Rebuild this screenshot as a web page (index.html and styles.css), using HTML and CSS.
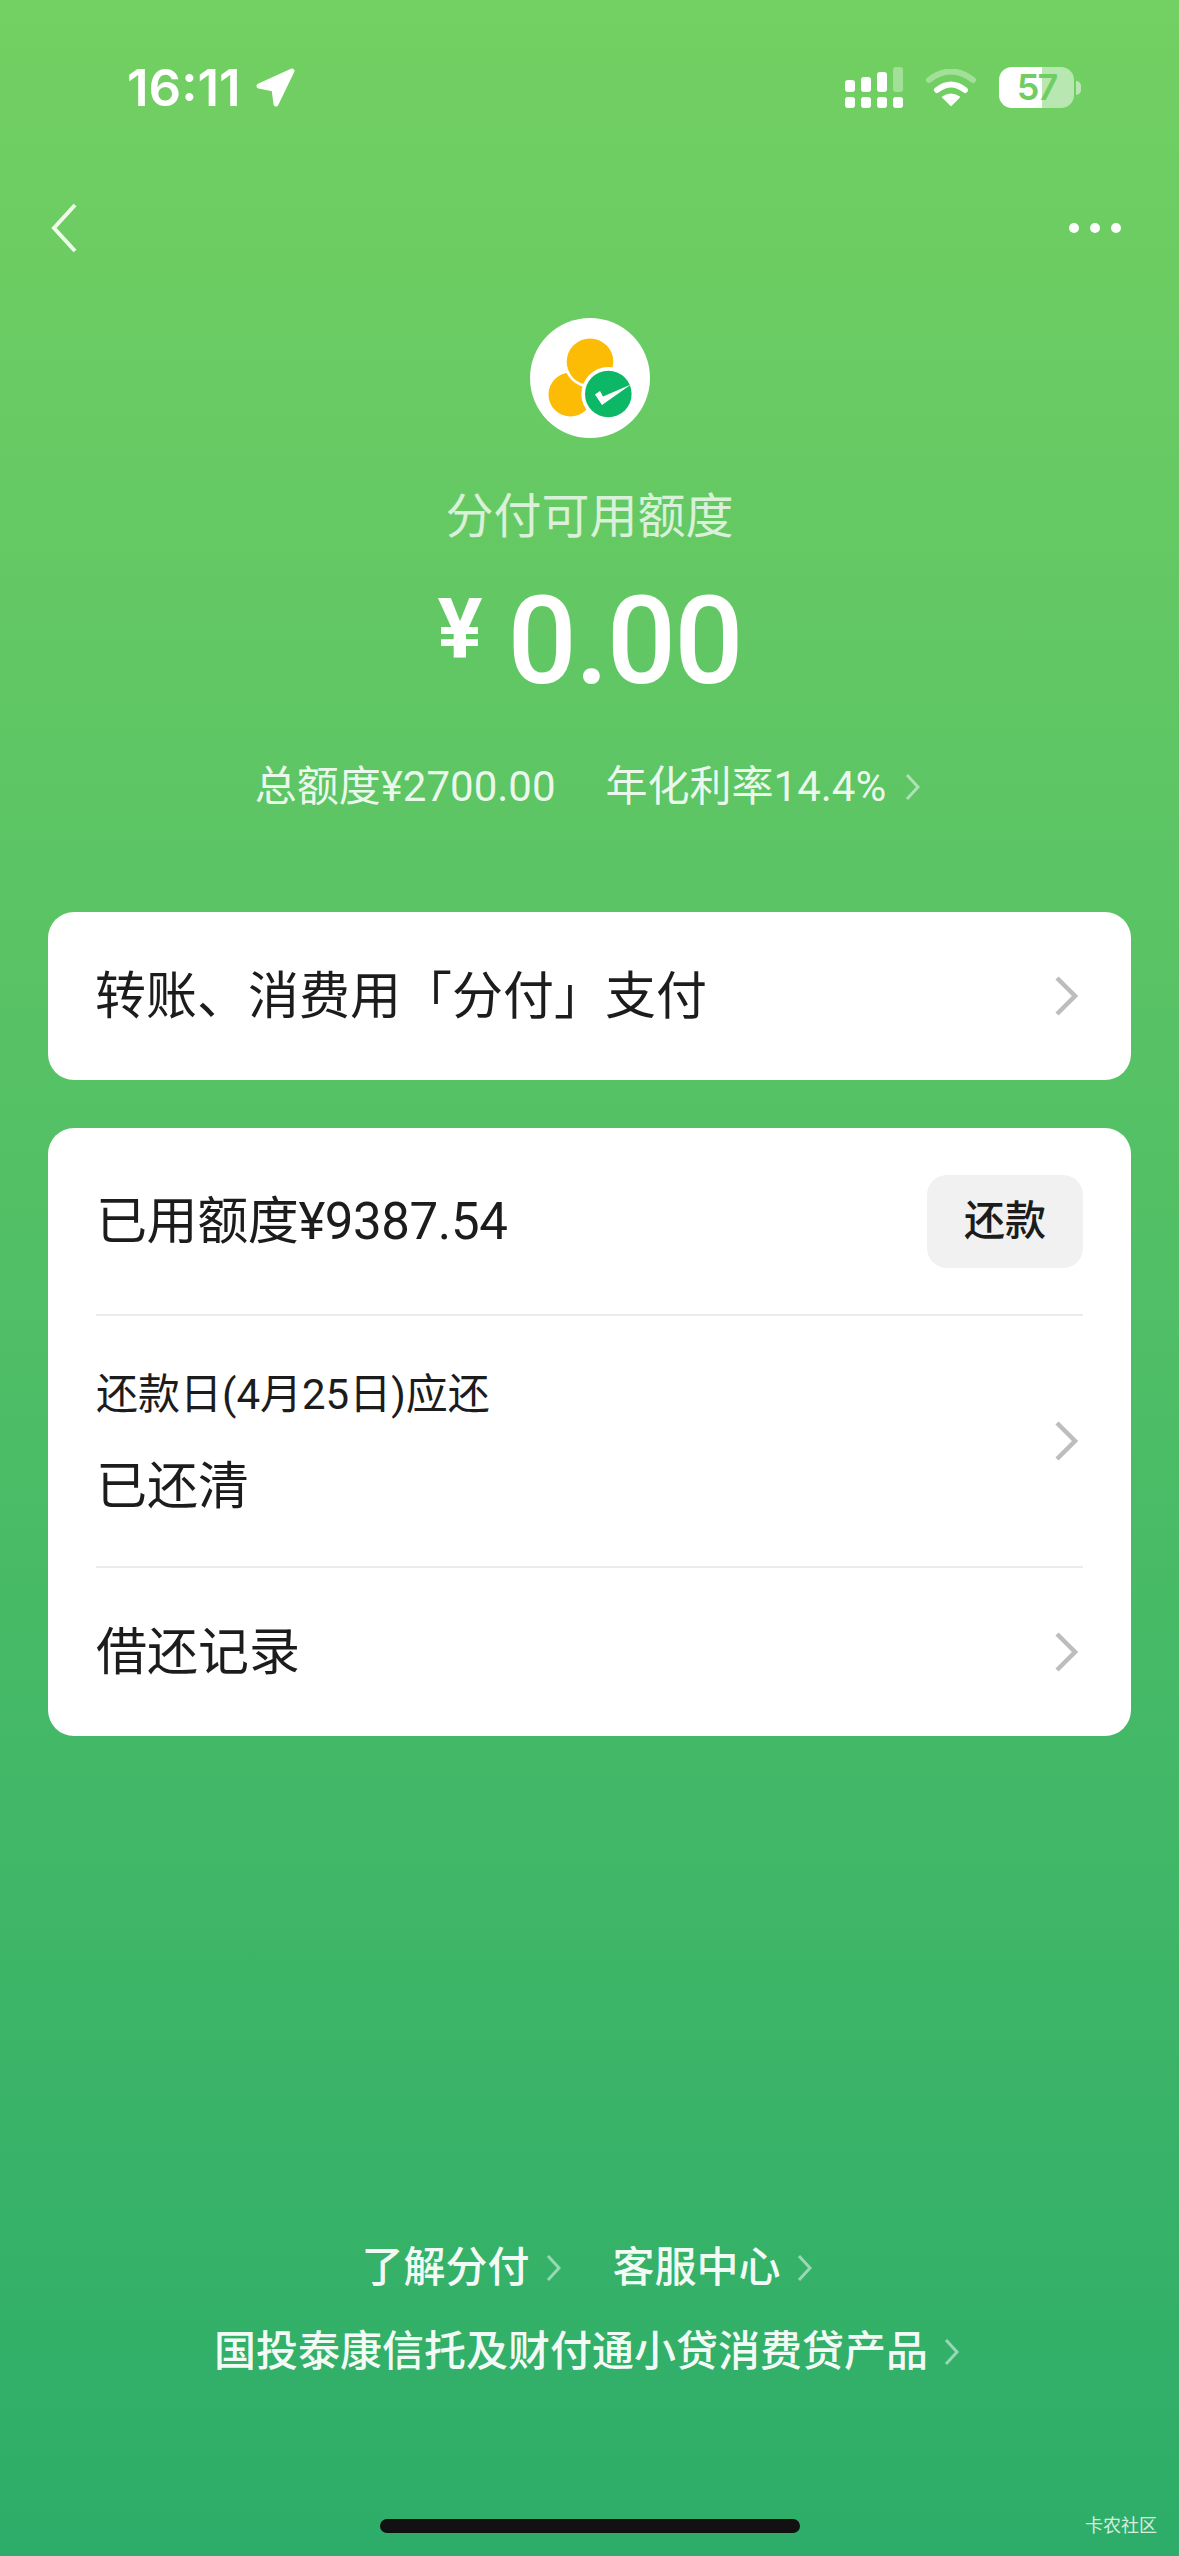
FILE: index.html
```html
<html>
<head>
    <meta charset="utf-8">
    <link rel="stylesheet" href="styles.css">
</head>
<body>
<div class="page">
    <div class="status">
        <div class="status_left">
            <span class="time">16:11</span>
            <svg class="arrow" viewBox="0 0 39 39"><path d="M3 18 L36 3 L20 36 L18 21 Z" fill="#fff" stroke="#fff" stroke-width="5" stroke-linejoin="round"/></svg>
        </div>
        <div class="status_right">
            <svg class="signal" viewBox="0 0 58 41" fill="#fff">
                <rect x="0" y="13" width="10" height="12" rx="3"/>
                <rect x="16" y="10" width="10" height="15" rx="3"/>
                <rect x="32" y="5" width="10" height="20" rx="3"/>
                <rect x="48" y="0" width="10" height="25" rx="3" opacity=".35"/>
                <rect x="0" y="30" width="10" height="11" rx="3"/>
                <rect x="16" y="30" width="10" height="11" rx="3"/>
                <rect x="32" y="30" width="10" height="11" rx="3"/>
                <rect x="48" y="30" width="10" height="11" rx="3"/>
            </svg>
            <svg class="wifi" viewBox="0 0 50 38" fill="none" stroke="#fff">
                <path d="M3 11 Q25 -6 47 11" stroke-width="6" stroke-linecap="round" opacity=".35"/>
                <path d="M11 21 Q25 10 39 21" stroke-width="6" stroke-linecap="round"/>
                <path d="M25 36 L17 28 Q25 23 33 28 Z" fill="#fff" stroke-width="2" stroke-linejoin="round"/>
            </svg>
            <div class="battery">
                <div class="battery_body">57</div>
                <div class="battery_nub"></div>
            </div>
        </div>
    </div>

    <div class="nav">
        <svg class="back" viewBox="0 0 28 52" fill="none"><path d="M25 3 L4 26 L25 49" stroke="#eefbe9" stroke-width="4"/></svg>
        <div class="more"><span></span><span></span><span></span></div>
    </div>

    <div class="hero">
        <svg class="logo" viewBox="0 0 120 120">
            <circle cx="60" cy="60" r="60" fill="#fff"/>
            <circle cx="40.5" cy="76.5" r="22" fill="#fcbc05"/>
            <circle cx="60" cy="43.7" r="26" fill="#fff"/>
            <circle cx="60" cy="43.7" r="23.3" fill="#fcbc05"/>
            <circle cx="78.3" cy="76" r="27" fill="#fff"/>
            <circle cx="78.3" cy="76" r="23.3" fill="#0cb865"/>
            <path d="M65 76.5 L70 73 L73 78.5 L101 66.5 L72 87 Z" fill="#fff"/>
        </svg>
        <div class="hero_title">分付可用额度</div>
        <div class="amount"><span class="amount_sign">¥</span><span class="amount_num">0.00</span></div>
        <div class="hero_sub">
            <span>总额度¥2700.00</span>
            <span class="hero_rate">年化利率14.4%</span>
            <svg class="small_chevron" viewBox="0 0 15 28" fill="none"><path d="M2 2 L13 14 L2 26"/></svg>
        </div>
    </div>

    <div class="card card_first">
        <div class="row row_pay">
            <span class="row_text">转账、消费用「分付」支付</span>
            <svg class="chevron" viewBox="0 0 23 40" fill="none"><path d="M2 2 L20 20 L2 38"/></svg>
        </div>
    </div>

    <div class="card card_second">
        <div class="row row_used">
            <span class="row_text">已用额度¥9387.54</span>
            <div class="repay_button">还款</div>
        </div>
        <div class="row row_due">
            <div class="due_text">
                <div class="due_label">还款日(4月25日)应还</div>
                <div class="row_text">已还清</div>
            </div>
            <svg class="chevron" viewBox="0 0 23 40" fill="none"><path d="M2 2 L20 20 L2 38"/></svg>
        </div>
        <div class="row row_record">
            <span class="row_text">借还记录</span>
            <svg class="chevron" viewBox="0 0 23 40" fill="none"><path d="M2 2 L20 20 L2 38"/></svg>
        </div>
    </div>

    <div class="links">
        <div class="links_row">
            <span>了解分付</span>
            <svg class="small_chevron" viewBox="0 0 15 28" fill="none"><path d="M2 2 L13 14 L2 26"/></svg>
            <span class="links_second">客服中心</span>
            <svg class="small_chevron" viewBox="0 0 15 28" fill="none"><path d="M2 2 L13 14 L2 26"/></svg>
        </div>
        <div class="links_row links_row_two">
            <span>国投泰康信托及财付通小贷消费贷产品</span>
            <svg class="small_chevron" viewBox="0 0 15 28" fill="none"><path d="M2 2 L13 14 L2 26"/></svg>
        </div>
    </div>

    <div class="home_bar"></div>
    <div class="watermark">卡农社区</div>
</div>
</body>
</html>
```

FILE: styles.css
```css
html, body {
    margin: 0;
    padding: 0;
}

.page {
    position: relative;
    width: 1179px;
    height: 2556px;
    overflow: hidden;
    display: flex;
    flex-direction: column;
    color: #fff;
    font-family: Roboto, "Noto Sans CJK SC", sans-serif;
    background: linear-gradient(180deg, #73d062 0%, #4fbe66 52%, #2dad69 100%);
}

/* status bar */
.status {
    display: flex;
    justify-content: space-between;
    align-items: center;
    height: 41px;
    margin-top: 67px;
    padding: 0 105px 0 127px;
}

.status_left {
    display: flex;
    align-items: center;
    gap: 15px;
}

.time {
    font-family: Inter, sans-serif;
    font-size: 51px;
    font-weight: 600;
    line-height: 41px;
    letter-spacing: 0;
}

.arrow {
    width: 39px;
    height: 39px;
}

.status_right {
    display: flex;
    align-items: center;
}

.signal {
    width: 58px;
    height: 41px;
}

.wifi {
    width: 50px;
    height: 38px;
    margin-left: 23px;
}

.battery {
    display: flex;
    align-items: center;
    gap: 2px;
    margin-left: 23px;
    margin-right: -7px;
}

.battery_body {
    width: 75px;
    height: 41px;
    border-radius: 13px;
    background: linear-gradient(90deg, #fff 57%, rgba(255,255,255,0.5) 57%);
    color: #6fcd62;
    font-family: Inter, sans-serif;
    font-size: 36px;
    font-weight: 600;
    line-height: 41px;
    letter-spacing: -2px;
    text-align: center;
}

.battery_nub {
    width: 5px;
    height: 14px;
    border-radius: 0 5px 5px 0;
    background: rgba(255,255,255,0.5);
}

/* top nav */
.nav {
    display: flex;
    justify-content: space-between;
    align-items: center;
    margin-top: 94px;
    padding: 0 58px 0 50px;
}

.back {
    width: 28px;
    height: 52px;
}

.more {
    display: flex;
    gap: 11px;
}

.more span {
    width: 10px;
    height: 10px;
    border-radius: 50%;
    background: #fff;
}

/* hero */
.hero {
    display: flex;
    flex-direction: column;
    align-items: center;
    margin-top: 64px;
}

.logo {
    width: 120px;
    height: 120px;
}

.hero_title {
    margin-top: 51px;
    font-size: 48px;
    line-height: 56px;
    color: rgba(255,255,255,0.75);
}

.amount {
    display: flex;
    align-items: flex-start;
    margin-top: 32px;
    height: 130px;
}

.amount_sign {
    font-size: 84px;
    font-weight: 700;
    line-height: 106px;
    margin-right: 25px;
}

.amount_num {
    font-size: 122px;
    font-weight: 500;
    line-height: 130px;
    letter-spacing: -2px;
}

.hero_sub {
    display: flex;
    align-items: center;
    margin-top: 56px;
    padding-right: 4px;
    font-size: 42px;
    line-height: 48px;
    color: rgba(255,255,255,0.9);
}

.hero_rate {
    margin-left: 50px;
}

.small_chevron {
    width: 15px;
    height: 28px;
    margin-left: 19px;
}

.small_chevron path {
    stroke: rgba(255,255,255,0.5);
    stroke-width: 3;
}

/* cards */
.card {
    margin: 0 48px;
    background: #fff;
    border-radius: 26px;
    color: #1c1c1c;
}

.card_first {
    margin-top: 101px;
}

.card_second {
    margin-top: 48px;
    padding: 0 48px;
}

.row {
    display: flex;
    justify-content: space-between;
    align-items: center;
}

.row_text {
    padding-top: 2px;
    font-size: 51px;
    line-height: 60px;
    font-weight: 400;
}

.row_pay {
    height: 168px;
    padding: 0 53px 0 47px;
}

.chevron {
    width: 23px;
    height: 40px;
    margin-right: 5px;
}

.chevron path {
    stroke: #bdbdbd;
    stroke-width: 4.5;
}

.row_pay .chevron {
    margin-right: 0;
}

.row_used {
    height: 186px;
    border-bottom: 2px solid #ebebeb;
}

.row_used .row_text {
    letter-spacing: -0.4px;
}

.repay_button {
    width: 156px;
    height: 93px;
    border-radius: 20px;
    background: #f1f1f1;
    font-size: 41px;
    font-weight: 500;
    line-height: 93px;
    text-align: center;
}

.row_due {
    height: 250px;
    border-bottom: 2px solid #ebebeb;
}

.due_text {
    display: flex;
    flex-direction: column;
    gap: 34px;
    padding-top: 4px;
}

.due_label {
    font-size: 42px;
    line-height: 52px;
}

.row_record {
    height: 168px;
}

/* bottom links */
.links {
    display: flex;
    flex-direction: column;
    align-items: center;
    margin-top: auto;
    margin-bottom: 176px;
    font-size: 42px;
    font-weight: 500;
    line-height: 56px;
    color: rgba(255,255,255,0.95);
}

.links_row {
    display: flex;
    align-items: center;
    padding-right: 6px;
}

.links_row .small_chevron {
    margin-left: 16px;
}

.links_row_two {
    margin-top: 28px;
}

.links_second {
    margin-left: 52px;
}

.home_bar {
    position: absolute;
    left: 380px;
    bottom: 23px;
    width: 420px;
    height: 14px;
    border-radius: 7px;
    background: #111;
}

.watermark {
    position: absolute;
    right: 22px;
    bottom: 19px;
    font-size: 18px;
    line-height: 22px;
    color: rgba(255,255,255,0.8);
}
```
